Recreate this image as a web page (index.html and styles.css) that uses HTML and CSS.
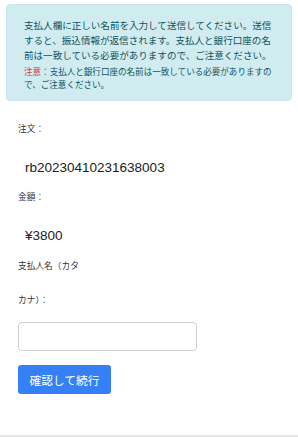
FILE: index.html
```html
<!DOCTYPE html>
<html lang="ja">
<head>
<meta charset="utf-8">
<link rel="stylesheet" href="styles.css">
</head>
<body>
<div class="page">
  <div class="alert">
    <p class="alert-main">支払人欄に正しい名前を入力して送信してください。送信すると、振込情報が返信されます。支払人と銀行口座の名前は一致している必要がありますので、ご注意ください。</p>
    <p class="alert-note"><span class="note-red">注意</span>：支払人と銀行口座の名前は一致している必要がありますので、ご注意ください。</p>
  </div>
  <form class="form">
    <div class="label first">注文：</div>
    <div class="value">rb20230410231638003</div>
    <div class="label">金額：</div>
    <div class="value">¥3800</div>
    <label class="label name-label" for="payer">支払人名（カタカナ）：</label>
    <input class="input" id="payer" type="text">
    <button class="btn" type="button">確認して続行</button>
  </form>
  <div class="spacer"></div>
  <div class="bottom-bar"></div>
</div>
</body>
</html>
```
FILE: styles.css
```css
html, body {
  margin: 0;
  padding: 0;
  background: #ffffff;
}
body {
  font-family: "Liberation Sans", "Noto Sans CJK JP", sans-serif;
  color: #333333;
}
.page {
  height: 437px;
  display: flex;
  flex-direction: column;
}
.alert {
  margin: 4px 6px 0 6px;
  padding: 13px 17px 8px 17px;
  background: #d1ecf1;
  border: 1px solid #c8e6ec;
  border-radius: 4px;
  color: #0c5460;
}
.alert p {
  margin: 0;
}
.alert-main {
  font-size: 9.55px;
  line-height: 15px;
}
.alert .alert-note {
  font-size: 8.55px;
  line-height: 13px;
  margin-top: 3px;
}
.note-red {
  color: #d9383a;
}
.form {
  display: flex;
  flex-direction: column;
  align-items: flex-start;
  padding: 0 18px;
}
.label {
  font-size: 8.7px;
  line-height: 20px;
  color: #333333;
  margin-top: 9px;
}
.label.first {
  margin-top: 18px;
}
.value {
  font-size: 13.5px;
  line-height: 20px;
  color: #222222;
  padding-left: 7px;
  margin-top: 19px;
}
.name-label {
  width: 64px;
  line-height: 34px;
  margin-top: 3px;
}
.input {
  box-sizing: border-box;
  width: 179px;
  height: 29px;
  margin-top: 5px;
  border: 1px solid #d0d0d0;
  border-radius: 4px;
  background: #ffffff;
  padding: 0 6px;
}
.btn {
  box-sizing: border-box;
  height: 29px;
  width: 93px;
  margin-top: 14px;
  border: none;
  border-radius: 3px;
  background: #3580f4;
  color: #ffffff;
  font-family: "Liberation Sans", "Noto Sans CJK JP", sans-serif;
  font-size: 11.7px;
  padding: 0;
}
.spacer {
  flex: 1;
}
.bottom-bar {
  height: 2px;
  background: #e6e6e6;
}
```
